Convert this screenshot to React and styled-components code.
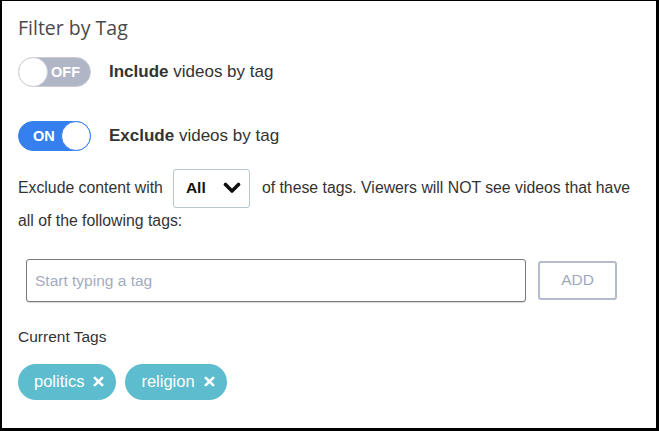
import React from "react";
import styled, { createGlobalStyle } from "styled-components";

const Global = createGlobalStyle`
  html, body { margin: 0; padding: 0; background: #fff; }
  body { font-family: "Liberation Sans", Arial, sans-serif; }
  * { box-sizing: border-box; }
`;

const Panel = styled.div`
  width: 659px;
  height: 431px;
  border-style: solid;
  border-color: #000;
  border-width: 1px 3px 3px 2px;
  padding: 14px 16px 0 16px;
  display: flex;
  flex-direction: column;
  color: #333;
`;

const Title = styled.h2`
  margin: 0;
  font-family: "Open Sans", sans-serif;
  font-weight: 400;
  font-size: 19.5px;
  line-height: 26px;
  color: #4a4a4a;
`;

const ToggleRow = styled.div`
  display: flex;
  align-items: center;
  gap: 18px;
  margin-top: ${(p) => p.$mt}px;
`;

const Track = styled.div`
  position: relative;
  width: 73px;
  height: 30px;
  border-radius: 15px;
  background: ${(p) => (p.$on ? "#3580ee" : "#b0b6c6")};
  border: 1px solid ${(p) => (p.$on ? "#3580ee" : "#c9ccd3")};
  display: flex;
  align-items: center;
  justify-content: ${(p) => (p.$on ? "flex-start" : "flex-end")};
  padding-left: ${(p) => (p.$on ? "14px" : "0")};
  padding-right: ${(p) => (p.$on ? "0" : "10px")};
  color: #fff;
  font-weight: 700;
  font-size: 14.5px;
`;

const Knob = styled.div`
  position: absolute;
  top: -1px;
  ${(p) => (p.$on ? "right: -1px;" : "left: -1px;")}
  width: 30px;
  height: 30px;
  border-radius: 50%;
  background: #fff;
  border: 1px solid ${(p) => (p.$on ? "#3580ee" : "#cfd2d8")};
`;

const Label = styled.span`
  font-size: 17px;
  color: #333;
  b { font-weight: 700; }
`;

const Para = styled.p`
  margin: 21px 0 0 0;
  font-size: 15.8px;
  line-height: 32px;
  color: #333;
`;

const Select = styled.span`
  display: inline-flex;
  align-items: center;
  justify-content: space-between;
  vertical-align: middle;
  width: 77px;
  height: 39px;
  margin: -4px 12px -3px 10px;
  padding: 0 8px 0 12px;
  border: 1px solid #bcc3d3;
  border-radius: 3px;
  font-weight: 700;
  color: #111;
  font-size: 15.5px;
`;

const InputRow = styled.div`
  display: flex;
  align-items: center;
  gap: 12px;
  margin-top: 22px;
  padding-left: 8px;
`;

const Input = styled.input`
  width: 500px;
  height: 43px;
  border: 1px solid #7a7a7a;
  border-radius: 3px;
  box-shadow: 0 1px 1px rgba(0,0,0,0.15);
  padding: 2px 8px 0 8px;
  font-family: "Liberation Sans", Arial, sans-serif;
  font-size: 15.5px;
  outline: none;
  &::placeholder { color: #a3abc0; }
`;

const AddButton = styled.button`
  width: 79px;
  height: 39px;
  border: 2px solid #b3bbcd;
  border-radius: 3px;
  background: #fff;
  color: #a2aabd;
  font-family: "Liberation Sans", Arial, sans-serif;
  font-size: 15.5px;
`;

const SubHead = styled.div`
  margin-top: 25px;
  font-size: 15.5px;
  line-height: 20px;
  color: #333;
`;

const Tags = styled.div`
  display: flex;
  gap: 9px;
  margin-top: 17px;
`;

const Tag = styled.span`
  display: inline-flex;
  align-items: center;
  gap: 9px;
  height: 36px;
  padding: 0 12px 0 16px;
  border-radius: 18px;
  background: #5dbccd;
  color: #fff;
  font-size: 16.5px;
`;

const Chevron = () => (
  <svg width="18" height="12" viewBox="0 0 18 12">
    <path d="M2.5 2.5 L9 9 L15.5 2.5" fill="none" stroke="#111" strokeWidth="3.6" strokeLinecap="round" strokeLinejoin="round" />
  </svg>
);

const XIcon = () => (
  <svg width="11" height="11" viewBox="0 0 11 11">
    <path d="M1.8 1.8 L9.2 9.2 M9.2 1.8 L1.8 9.2" stroke="#fff" strokeWidth="2.6" strokeLinecap="round" />
  </svg>
);

function Toggle({ on }) {
  return (
    <Track $on={on}>
      {on ? "ON" : "OFF"}
      <Knob $on={on} />
    </Track>
  );
}

export default function App() {
  return (
    <>
      <Global />
      <Panel>
        <Title>Filter by Tag</Title>
        <ToggleRow $mt={16}>
          <Toggle on={false} />
          <Label><b>Include</b> videos by tag</Label>
        </ToggleRow>
        <ToggleRow $mt={34}>
          <Toggle on={true} />
          <Label><b>Exclude</b> videos by tag</Label>
        </ToggleRow>
        <Para>
          <span>Exclude content with</span>
          <Select>All <Chevron /></Select>
          <span>of these tags. Viewers will NOT see videos that have</span>
          <br />
          <span>all of the following tags:</span>
        </Para>
        <InputRow>
          <Input placeholder="Start typing a tag" />
          <AddButton>ADD</AddButton>
        </InputRow>
        <SubHead>Current Tags</SubHead>
        <Tags>
          <Tag>politics<XIcon /></Tag>
          <Tag>religion<XIcon /></Tag>
        </Tags>
      </Panel>
    </>
  );
}
